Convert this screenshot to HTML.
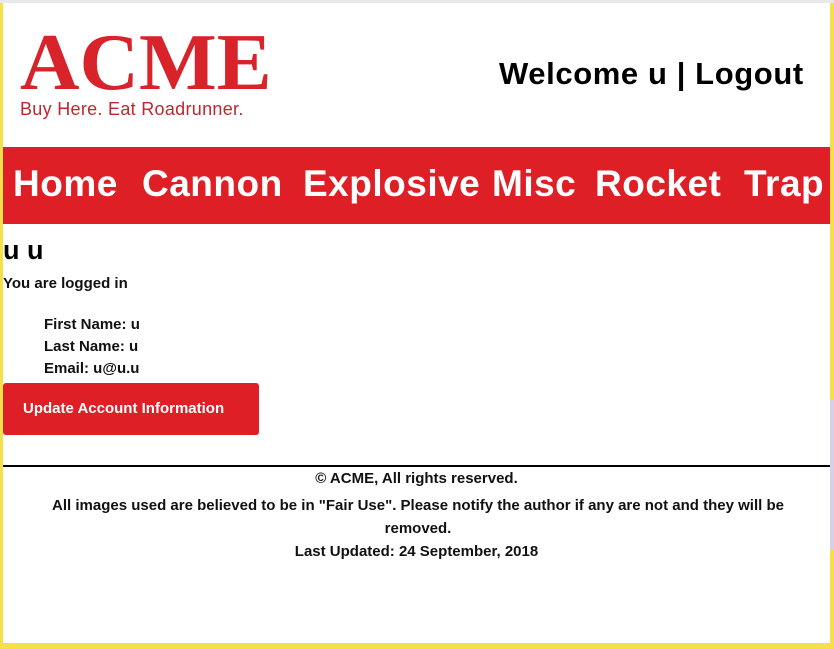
<!DOCTYPE html>
<html><head><style>
body{margin:0;width:834px;height:649px;overflow:hidden;background:#f5e04a;font-family:"Liberation Sans",sans-serif;position:relative}
#frame{position:absolute;left:3px;top:3px;width:827px;height:640px;background:#fff}
#top{position:absolute;left:0;top:0;width:834px;height:3px;background:#e8e8e8}
#rside{position:absolute;right:0;top:400px;width:4px;height:150px;background:#d8d0e8}
.acme{position:absolute;left:17px;top:20px;font-family:"Liberation Serif",serif;font-weight:bold;font-size:80px;color:#d9232b;line-height:80px;transform:scaleX(1.03);transform-origin:left}
.tag{position:absolute;left:17px;top:96px;font-size:18px;color:#c0262e;letter-spacing:0.3px}
.welcome{position:absolute;left:496px;top:53px;font-size:31px;font-weight:bold;color:#000;letter-spacing:0.6px}
nav{position:absolute;left:0;top:144px;width:827px;height:77px;background:#df1f26}
nav span{position:absolute;top:16px;color:#fff;font-weight:bold;font-size:37px;letter-spacing:0.5px}
h1{position:absolute;left:0;top:232px;margin:0;font-size:27px;font-weight:bold}
.t{position:absolute;font-size:15px;font-weight:bold;color:#111}
.btn{position:absolute;left:0;top:380px;width:256px;height:52px;background:#df1f26;border-radius:3px;color:#fff;font-size:15px;font-weight:bold;line-height:52px;text-indent:20px}
hr{position:absolute;left:0;top:462px;width:827px;margin:0;border:0;border-top:2px solid #000}
.f{position:absolute;left:0;width:827px;text-align:center;font-size:15px;font-weight:bold;color:#111}
</style></head><body>
<div id="top"></div>
<div id="frame">
<div class="acme">ACME</div>
<div class="tag">Buy Here. Eat Roadrunner.</div>
<div class="welcome">Welcome u | Logout</div>
<nav><span style="left:10px">Home</span><span style="left:139px">Cannon</span><span style="left:300px">Explosive</span><span style="left:489px">Misc</span><span style="left:592px">Rocket</span><span style="left:741px">Trap</span></nav>
<h1>u u</h1>
<div class="t" style="left:0;top:272px">You are logged in</div>
<div class="t" style="left:41px;top:313px">First Name: u</div>
<div class="t" style="left:41px;top:335px">Last Name: u</div>
<div class="t" style="left:41px;top:357px">Email: u@u.u</div>
<div class="btn">Update Account Information</div>
<hr>
<div class="f" style="top:467px">© ACME, All rights reserved.</div>
<div class="f" style="top:491px;left:20px;width:790px;line-height:23px">All images used are believed to be in "Fair Use". Please notify the author if any are not and they will be removed.</div>
<div class="f" style="top:540px">Last Updated: 24 September, 2018</div>
</div>
<div id="rside"></div>
</body></html>
